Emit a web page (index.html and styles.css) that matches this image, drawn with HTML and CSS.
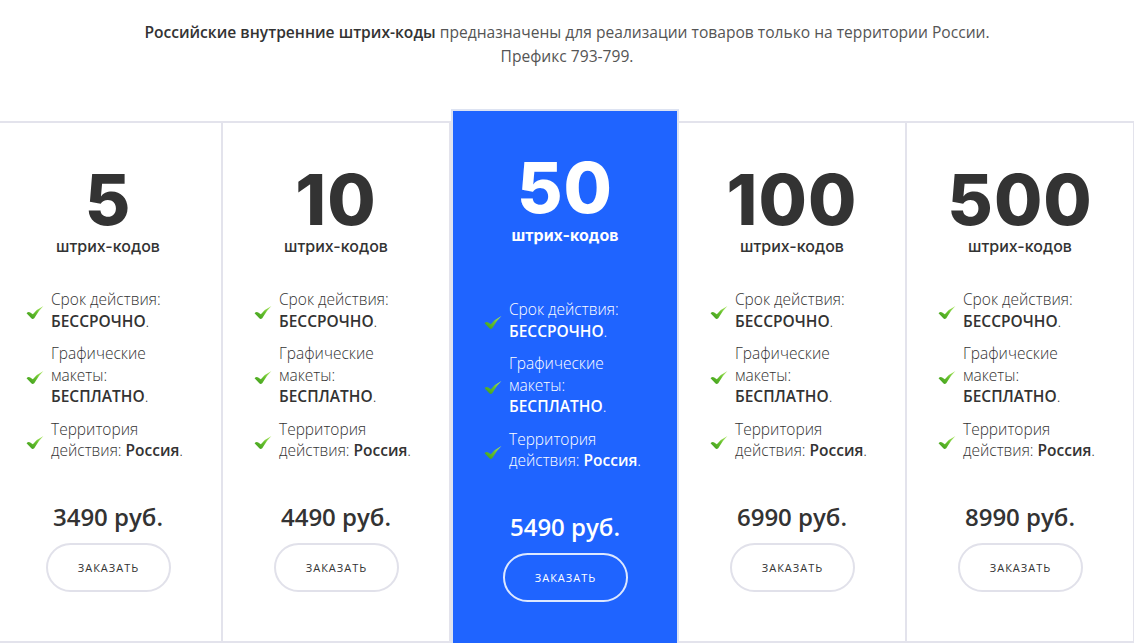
FILE: index.html
```html
<!DOCTYPE html>
<html lang="ru">
<head>
    <meta charset="UTF-8">
    <title>Российские штрих-коды</title>
    <link rel="stylesheet" href="styles.css">
</head>
<body>
    <svg width="0" height="0" class="defs">
        <defs>
            <linearGradient id="tick" x1="0" y1="1" x2="1" y2="0">
                <stop offset="0" stop-color="#3c9a1c"/>
                <stop offset="0.55" stop-color="#68c22e"/>
                <stop offset="1" stop-color="#b8ec70"/>
            </linearGradient>
            <symbol id="check" viewBox="0 0 16 12">
                <path d="M0.2 6.8 Q1.8 4.8 3.6 5.9 L6 7.7 Q10 2.8 15.8 0.1 Q11 4.6 7.3 11.2 Q5.8 12.6 4.6 11.3 Z" fill="url(#tick)"/>
            </symbol>
        </defs>
    </svg>

    <p class="intro">
        <strong>Российские внутренние штрих-коды</strong> предназначены для реализации товаров только на территории России.<br>
        Префикс 793-799.
    </p>

    <div class="plans">
        <div class="plan">
            <div class="plan-count">5</div>
            <div class="plan-unit">штрих-кодов</div>
            <ul class="features">
                <li><svg class="check"><use href="#check"/></svg><span>Срок действия: <b>БЕССРОЧНО</b>.</span></li>
                <li><svg class="check"><use href="#check"/></svg><span>Графические макеты: <b>БЕСПЛАТНО</b>.</span></li>
                <li><svg class="check"><use href="#check"/></svg><span>Территория действия: <b>Россия</b>.</span></li>
            </ul>
            <div class="price">3490 руб.</div>
            <button class="order">ЗАКАЗАТЬ</button>
        </div>
        <div class="plan">
            <div class="plan-count">10</div>
            <div class="plan-unit">штрих-кодов</div>
            <ul class="features">
                <li><svg class="check"><use href="#check"/></svg><span>Срок действия: <b>БЕССРОЧНО</b>.</span></li>
                <li><svg class="check"><use href="#check"/></svg><span>Графические макеты: <b>БЕСПЛАТНО</b>.</span></li>
                <li><svg class="check"><use href="#check"/></svg><span>Территория действия: <b>Россия</b>.</span></li>
            </ul>
            <div class="price">4490 руб.</div>
            <button class="order">ЗАКАЗАТЬ</button>
        </div>
        <div class="plan plan-featured">
            <div class="plan-count">50</div>
            <div class="plan-unit">штрих-кодов</div>
            <ul class="features">
                <li><svg class="check"><use href="#check"/></svg><span>Срок действия: <b>БЕССРОЧНО</b>.</span></li>
                <li><svg class="check"><use href="#check"/></svg><span>Графические макеты: <b>БЕСПЛАТНО</b>.</span></li>
                <li><svg class="check"><use href="#check"/></svg><span>Территория действия: <b>Россия</b>.</span></li>
            </ul>
            <div class="price">5490 руб.</div>
            <button class="order">ЗАКАЗАТЬ</button>
        </div>
        <div class="plan">
            <div class="plan-count">100</div>
            <div class="plan-unit">штрих-кодов</div>
            <ul class="features">
                <li><svg class="check"><use href="#check"/></svg><span>Срок действия: <b>БЕССРОЧНО</b>.</span></li>
                <li><svg class="check"><use href="#check"/></svg><span>Графические макеты: <b>БЕСПЛАТНО</b>.</span></li>
                <li><svg class="check"><use href="#check"/></svg><span>Территория действия: <b>Россия</b>.</span></li>
            </ul>
            <div class="price">6990 руб.</div>
            <button class="order">ЗАКАЗАТЬ</button>
        </div>
        <div class="plan">
            <div class="plan-count">500</div>
            <div class="plan-unit">штрих-кодов</div>
            <ul class="features">
                <li><svg class="check"><use href="#check"/></svg><span>Срок действия: <b>БЕССРОЧНО</b>.</span></li>
                <li><svg class="check"><use href="#check"/></svg><span>Графические макеты: <b>БЕСПЛАТНО</b>.</span></li>
                <li><svg class="check"><use href="#check"/></svg><span>Территория действия: <b>Россия</b>.</span></li>
            </ul>
            <div class="price">8990 руб.</div>
            <button class="order">ЗАКАЗАТЬ</button>
        </div>
    </div>
</body>
</html>
```

FILE: styles.css
```css
body {
    margin: 0;
    background: #fff;
    color: #333;
    font-family: "Open Sans", "Liberation Sans", sans-serif;
    overflow: hidden;
}

.defs {
    position: absolute;
}

.intro {
    margin: 0;
    padding-top: 20px;
    text-align: center;
    font-size: 15.6px;
    line-height: 24px;
    color: #555;
}

.intro strong {
    font-weight: 600;
    color: #333;
}

.plans {
    display: flex;
    align-items: flex-start;
    margin: 41px 0 0 -5px;
}

.plan {
    flex: 0 0 228px;
    box-sizing: border-box;
    height: 522px;
    margin-top: 12px;
    padding: 46px 0 0 31px;
    border-top: 2px solid #e3e3ec;
    border-right: 2px solid #e3e3ec;
    border-bottom: 2px solid #e3e3ec;
    background: #fff;
    text-align: center;
}

.plan-count {
    margin-left: -31px;
    font-family: Inter, "DejaVu Sans", sans-serif;
    font-weight: 800;
    font-size: 70px;
    line-height: 62px;
    letter-spacing: 1px;
    color: #333;
}

.plan-unit {
    margin: 5px 0 0 -31px;
    font-family: Inter, "DejaVu Sans", sans-serif;
    font-weight: 500;
    font-size: 16px;
    line-height: 20px;
    color: #333;
}

.features {
    list-style: none;
    margin: 33px 0 0;
    padding: 0;
    text-align: left;
    display: flex;
    flex-direction: column;
    gap: 11px;
}

.features li {
    display: flex;
    align-items: center;
}

.check {
    flex: 0 0 18px;
    width: 18px;
    height: 13px;
    margin-right: 7px;
    margin-top: 4px;
}

.features span {
    max-width: 148px;
    font-size: 15.5px;
    font-weight: 300;
    line-height: 21.5px;
    color: #333;
}

.features b {
    font-weight: 600;
}

.price {
    margin: 40px 0 0 -31px;
    font-size: 24px;
    font-weight: 600;
    line-height: 30px;
    color: #333;
}

.order {
    display: block;
    width: 125px;
    height: 49px;
    margin: 11px auto 0;
    position: relative;
    left: -15px;
    border: 2px solid #e1e1ea;
    border-radius: 25px;
    background: transparent;
    font-family: "Open Sans", "Liberation Sans", sans-serif;
    font-size: 11px;
    letter-spacing: 1px;
    color: #333;
    cursor: pointer;
}

.plan-featured {
    margin-top: 0;
    height: 560px;
    padding-left: 31px;
    background: #1f64ff;
    border: 2px solid #dde3f2;
}

.plan-featured .plan-count,
.plan-featured .plan-unit,
.plan-featured .features span,
.plan-featured .price {
    color: #fff;
}

.plan-featured .plan-unit {
    margin-top: 6px;
    font-weight: 700;
}

.plan-featured .features {
    margin-top: 54px;
}

.plan-featured .order {
    margin-top: 11px;
    border-color: rgba(255, 255, 255, 0.85);
    color: #fff;
}
```
